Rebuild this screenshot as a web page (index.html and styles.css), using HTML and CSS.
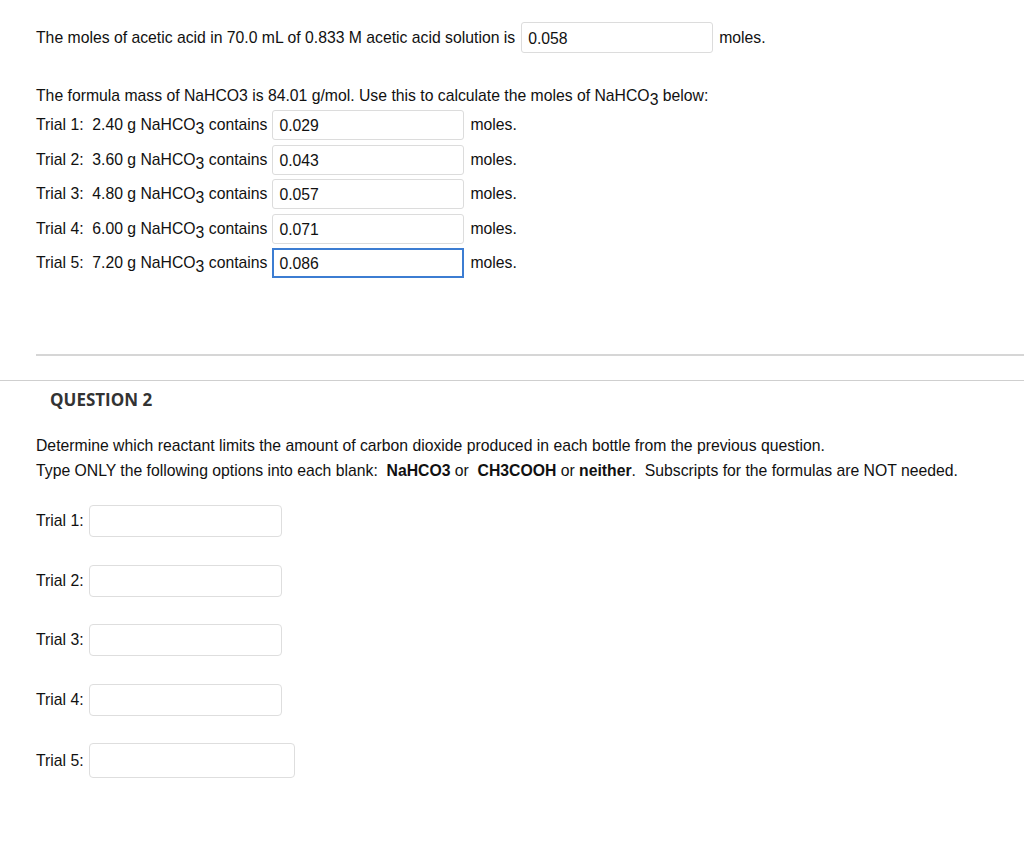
FILE: index.html
```html
<!DOCTYPE html>
<html>
<head>
<meta charset="utf-8">
<link rel="stylesheet" href="styles.css">
</head>
<body>
<div class="q1">
  <div class="row first">
    <span>The moles of acetic acid in 70.0 mL of 0.833 M acetic acid solution is</span>
    <input class="box wide" type="text" value="0.058">
    <span>moles.</span>
  </div>
  <p class="intro">The formula mass of NaHCO3 is 84.01 g/mol. Use this to calculate the moles of NaHCO<sub>3</sub> below:</p>
  <div class="trials">
    <div class="row trial"><span>Trial 1:&nbsp; 2.40 g NaHCO<sub>3</sub> contains</span><input class="box" type="text" value="0.029"><span>moles.</span></div>
    <div class="row trial"><span>Trial 2:&nbsp; 3.60 g NaHCO<sub>3</sub> contains</span><input class="box" type="text" value="0.043"><span>moles.</span></div>
    <div class="row trial"><span>Trial 3:&nbsp; 4.80 g NaHCO<sub>3</sub> contains</span><input class="box" type="text" value="0.057"><span>moles.</span></div>
    <div class="row trial"><span>Trial 4:&nbsp; 6.00 g NaHCO<sub>3</sub> contains</span><input class="box" type="text" value="0.071"><span>moles.</span></div>
    <div class="row trial"><span>Trial 5:&nbsp; 7.20 g NaHCO<sub>3</sub> contains</span><input class="box focused" type="text" value="0.086"><span>moles.</span></div>
  </div>
</div>
<div class="rule-inner"></div>
<div class="rule-outer"></div>
<div class="q2">
  <h2 class="qtitle">QUESTION 2</h2>
  <div class="instructions">
    <p>Determine which reactant limits the amount of carbon dioxide produced in each bottle from the previous question.</p>
    <p>Type ONLY the following options into each blank:&nbsp; <b>NaHCO3</b> or&nbsp; <b>CH3COOH</b> or <b>neither</b>.&nbsp; Subscripts for the formulas are NOT needed.</p>
  </div>
  <div class="answers">
    <div class="arow"><span>Trial 1:</span><input class="abox" type="text"></div>
    <div class="arow"><span>Trial 2:</span><input class="abox" type="text"></div>
    <div class="arow"><span>Trial 3:</span><input class="abox" type="text"></div>
    <div class="arow"><span>Trial 4:</span><input class="abox" type="text"></div>
    <div class="arow"><span>Trial 5:</span><input class="abox last" type="text"></div>
  </div>
</div>
</body>
</html>
```
FILE: styles.css
```css
html, body {
  margin: 0;
  padding: 0;
  background: #fff;
}
body {
  font-family: "Liberation Sans", Arial, sans-serif;
  font-size: 15.75px;
  color: #111;
  width: 1024px;
}
.q1 {
  padding: 22px 0 0 36px;
}
.row {
  display: flex;
  align-items: center;
}
.row.first {
  height: 31px;
}
.box {
  box-sizing: border-box;
  font-family: "Liberation Sans", Arial, sans-serif;
  font-size: 15.75px;
  color: #111;
  width: 192px;
  height: 30px;
  margin: 0 6px 0 5px;
  padding: 2px 6px 0;
  border: 1px solid #dcdcdc;
  border-radius: 3px;
  background: #fff;
  outline: none;
}
.box.wide {
  height: 31px;
  margin-left: 6px;
}
.box.focused {
  border: 2px solid #3c7dd2;
  border-radius: 0;
  padding-left: 5px;
}
sub {
  font-size: 15.75px;
  vertical-align: -4px;
  line-height: 0;
}
.intro {
  margin: 33px 0 0;
  line-height: 20px;
}
.trials {
  margin-top: 4px;
  display: flex;
  flex-direction: column;
  gap: 4.5px;
}
.trial {
  height: 30px;
}
.rule-inner {
  margin: 76px 0 0 36px;
  height: 2px;
  background: #d6d6d6;
}
.rule-outer {
  margin-top: 24px;
  height: 1px;
  background: #cfcfcf;
}
.q2 {
  padding-left: 36px;
}
.qtitle {
  margin: 9px 0 0 14px;
  font-family: "Open Sans", sans-serif;
  font-weight: 700;
  font-size: 17px;
  line-height: 20px;
  color: #333;
}
.instructions {
  margin-top: 23px;
}
.instructions p {
  margin: 0;
  line-height: 25px;
}
.answers {
  margin-top: 22px;
  display: flex;
  flex-direction: column;
  gap: 27.5px;
}
.arow {
  display: flex;
  align-items: center;
}
.abox {
  box-sizing: border-box;
  width: 193px;
  height: 32px;
  margin-left: 5px;
  border: 1px solid #dedede;
  border-radius: 4px;
  background: #fff;
  outline: none;
}
.abox.last {
  width: 206px;
  height: 35px;
}
```
